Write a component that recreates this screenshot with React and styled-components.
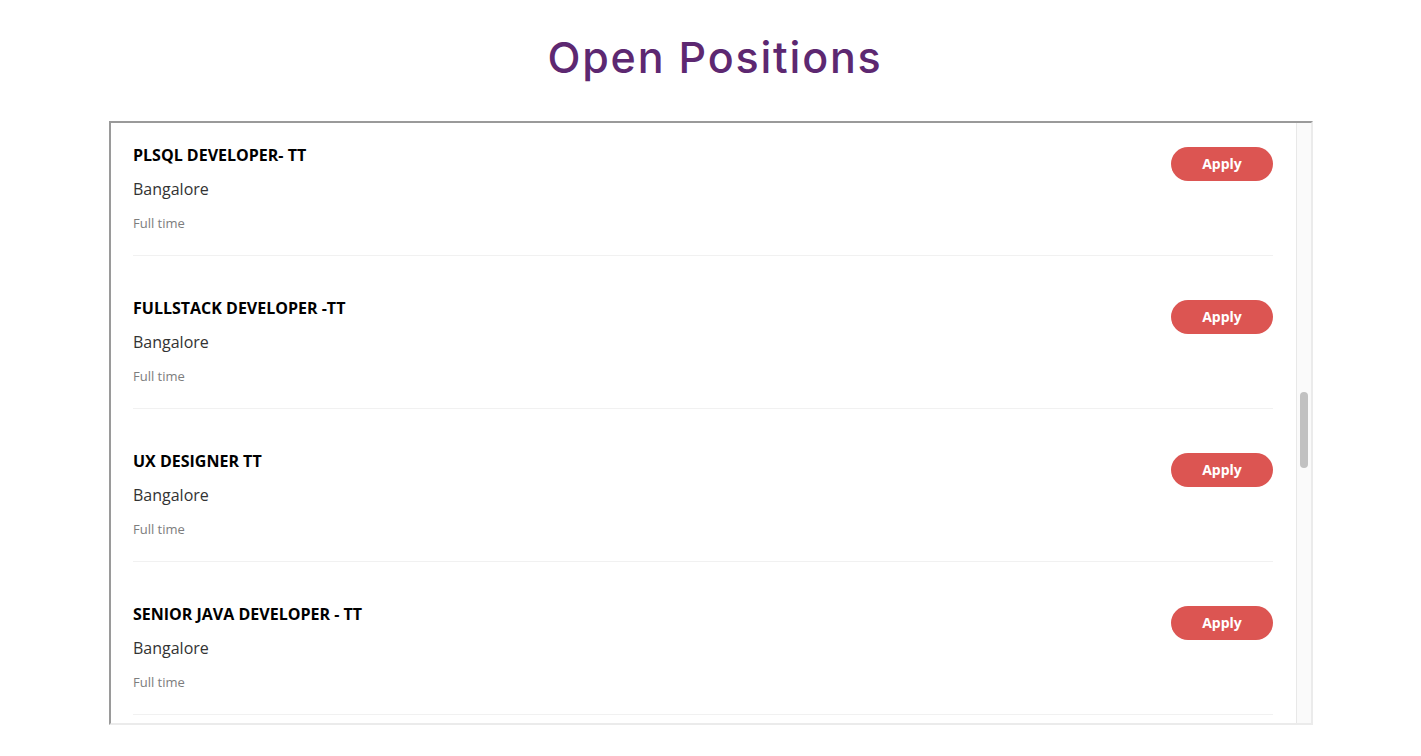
import React from "react";
import styled, { createGlobalStyle } from "styled-components";

const GlobalStyle = createGlobalStyle`
  html, body { margin: 0; padding: 0; background: #ffffff; }
  body { font-family: "Open Sans", "Liberation Sans", sans-serif; }
`;

const Page = styled.main`
  display: flex;
  flex-direction: column;
  align-items: center;
  padding-top: 31px;
`;

const Heading = styled.h1`
  margin: 0 0 38px;
  padding-left: 9px;
  font-family: Inter, "Open Sans", sans-serif;
  font-weight: 500;
  font-size: 43px;
  line-height: 52px;
  color: #5d2871;
  letter-spacing: 1.8px;
`;

const Frame = styled.div`
  display: flex;
  width: 1200px;
  height: 600px;
  border-style: solid;
  border-width: 2px;
  border-color: #9a9a9a #ebebeb #ebebeb #9a9a9a;
  background: #fff;
`;

const Viewport = styled.div`
  flex: 1;
  overflow: hidden;
`;

const ScrollTrack = styled.div`
  box-sizing: border-box;
  width: 15px;
  height: 100%;
  background: #fafafa;
  border-left: 1px solid #e8e8e8;
  padding: 0 3px 0 3px;
`;

const Thumb = styled.div`
  width: 8px;
  border-radius: 4px;
  background: #c1c1c1;
`;

const List = styled.ul`
  list-style: none;
  margin: 0 auto;
  padding: 0;
  width: 1140px;
`;

const Job = styled.li`
  display: flex;
  align-items: flex-start;
  justify-content: space-between;
  padding: 41px 0 22px;
  border-bottom: 1px solid #f1f1f1;

  &:first-child {
    padding-top: 21px;
  }
`;

const Info = styled.div`
  display: flex;
  flex-direction: column;
`;

const Title = styled.h3`
  margin: 0 0 11px;
  font-size: 16px;
  line-height: 22px;
  font-weight: 700;
  color: #000;
  text-transform: uppercase;
`;

const Location = styled.p`
  margin: 0 0 12px;
  font-size: 16px;
  line-height: 24px;
  color: #333;
`;

const Kind = styled.span`
  font-size: 13px;
  line-height: 20px;
  color: #7d7d7d;
`;

const ApplyButton = styled.button`
  margin-top: 3px;
  width: 102px;
  height: 34px;
  border: none;
  border-radius: 17px;
  background: #dc5552;
  color: #fff;
  font-family: "Open Sans", sans-serif;
  font-size: 14px;
  line-height: 33px;
  font-weight: 700;
  cursor: pointer;
  padding: 0 0 1px;
`;

const jobs = [
  "PLSQL Developer- TT",
  "Fullstack Developer -TT",
  "UX Designer TT",
  "Senior Java Developer - TT",
];

// scroll state of the list (total content vs. visible height)
const VIEW_H = 600;
const CONTENT_H = 4737;
const SCROLL_TOP = 2124;

export default function App() {
  const thumbH = Math.round((VIEW_H * VIEW_H) / CONTENT_H);
  const thumbTop = Math.round(
    (SCROLL_TOP / (CONTENT_H - VIEW_H)) * (VIEW_H - thumbH)
  );

  return (
    <>
      <GlobalStyle />
      <Page>
        <Heading>Open Positions</Heading>
        <Frame>
          <Viewport>
            <List>
              {jobs.map((t) => (
                <Job key={t}>
                  <Info>
                    <Title>{t}</Title>
                    <Location>Bangalore</Location>
                    <Kind>Full time</Kind>
                  </Info>
                  <ApplyButton>Apply</ApplyButton>
                </Job>
              ))}
            </List>
          </Viewport>
          <ScrollTrack>
            <Thumb style={{ marginTop: thumbTop, height: thumbH }} />
          </ScrollTrack>
        </Frame>
      </Page>
    </>
  );
}
